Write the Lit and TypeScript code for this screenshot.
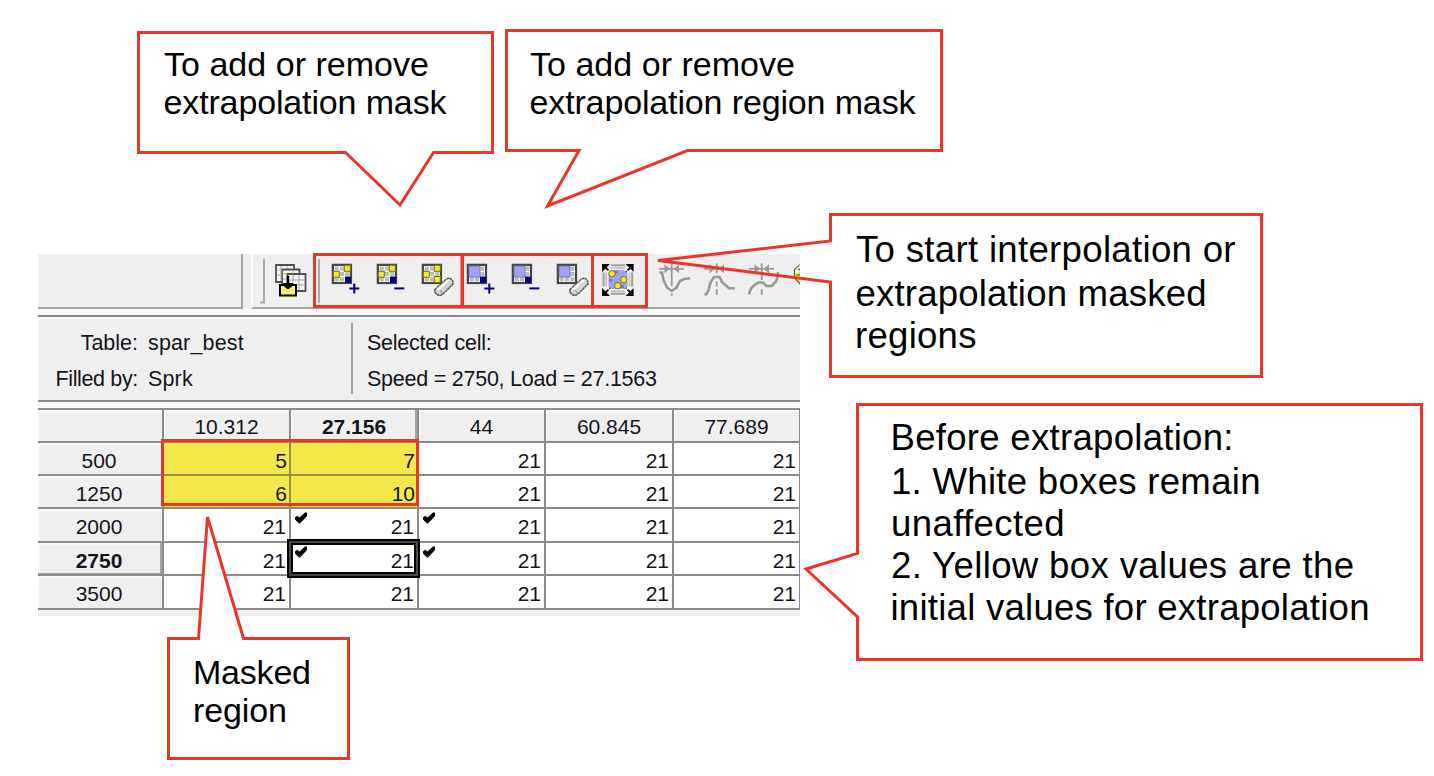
import { LitElement, html, svg, css } from "lit";
import { customElement } from "lit/decorators.js";
import { classMap } from "lit/directives/class-map.js";

type Line = [text: string, x: number, y: number, width: number];

const columns = ["10.312", "27.156", "44", "60.845", "77.689"];
const rows: { label: string; values: number[]; masked?: boolean; checks?: number[] }[] = [
  { label: "500", values: [5, 7, 21, 21, 21], masked: true },
  { label: "1250", values: [6, 10, 21, 21, 21], masked: true },
  { label: "2000", values: [21, 21, 21, 21, 21], checks: [1, 2] },
  { label: "2750", values: [21, 21, 21, 21, 21], checks: [1, 2] },
  { label: "3500", values: [21, 21, 21, 21, 21] },
];

const callouts: { path: string; fill: string; size: number; lines: Line[] }[] = [
  {
    path: "M138.5 32.5H492.5V152.5H433.5L400 205L345.5 152.5H138.5Z",
    fill: "#fff",
    size: 34,
    lines: [
      ["To add or remove", 164, 76, 265],
      ["extrapolation mask", 163.5, 114, 283],
    ],
  },
  {
    path: "M506.5 30.5H941.5V150.5H687.5L547.5 206L579 150.5H506.5Z",
    fill: "#fff",
    size: 34,
    lines: [
      ["To add or remove", 530, 76, 265],
      ["extrapolation region mask", 529.5, 114, 386],
    ],
  },
  {
    path: "M830.5 214.5H1261.5V376.5H830.5V282L658 260.5L830.5 241Z",
    fill: "none",
    size: 36.6,
    lines: [
      ["To start interpolation or", 856, 262, 379.5],
      ["extrapolation masked", 855.5, 305.5, 351],
      ["regions", 855, 348, 121.5],
    ],
  },
  {
    path: "M857.5 404.5H1421.5V659.5H857.5V617L806 569L857.5 553.5Z",
    fill: "#fff",
    size: 36.6,
    lines: [
      ["Before extrapolation:", 890.5, 450, 343],
      ["1. White boxes remain", 891, 493.5, 369.5],
      ["unaffected", 891, 536, 173.5],
      ["2. Yellow box values are the", 891, 578, 463],
      ["initial values for extrapolation", 890.5, 620, 479],
    ],
  },
  {
    path: "M168.5 638.5H198.5L207.5 517L243.5 638.5H348.5V758.5H168.5Z",
    fill: "#fff",
    size: 34,
    lines: [
      ["Masked", 193, 684, 118],
      ["region", 193, 721.5, 94],
    ],
  },
];

const gridFrame = svg`
  <rect x="4.7" y="9.7" width="20.4" height="20.4" fill="#484848" />
  <rect x="7" y="12" width="16" height="16" fill="#fff" />
  <path d="M7.5 12.5h4.3v4.3h-4.3zM12.9 12.5h4.3v4.3h-4.3zM18.3 12.5h4.3v4.3h-4.3zM7.5 17.9h4.3v4.3h-4.3zM12.9 17.9h4.3v4.3h-4.3zM18.3 17.9h4.3v4.3h-4.3zM7.5 23.3h4.3v4.3h-4.3zM12.9 23.3h4.3v4.3h-4.3zM18.3 23.3h4.3v4.3h-4.3z" fill="#bdbdbd" />`;
const yellowDots = svg`
  <rect x="17.3" y="11.3" width="6" height="6" fill="#f5ea1c" stroke="#776f28" stroke-width="1" />
  <rect x="6.3" y="17.3" width="6" height="6" fill="#f5ea1c" stroke="#776f28" stroke-width="1" />`;
const regionFill = svg`<rect x="7" y="12" width="11" height="11" fill="#a2a2fb" stroke="#6b6b9a" stroke-width=".8" />`;
const navyDot = svg`<rect x="18" y="22.6" width="6.2" height="6.2" fill="#000080" />`;
const plus = svg`<path d="M22.3 34.4h10M27.3 29.4v10" stroke="#000080" stroke-width="2" />`;
const minus = svg`<path d="M22.3 34.4h10" stroke="#000080" stroke-width="2" />`;
const eraser = svg`
  <path d="M18 35.5L29 25.5Q32 23 34.5 25.5Q37 28 35.5 30.5L26 40Q22.5 42.5 19.5 40Q17 38 18 35.5Z" fill="#d4d4d4" stroke="#555" stroke-width="1.5" stroke-dasharray="2.6 .5" />
  <path d="M19.5 35L29.5 26.3Q31.5 25 33 26.2L22.5 36Z" fill="#fff" />
  <path d="M22.8 36.2Q25.5 37.5 25.2 40" fill="none" stroke="#888" />`;
const arrowsOnAxis = svg`
  <path d="M7 14.8h25" stroke="#999" stroke-width="1.7" />
  <path d="M12.5 10.3L18 14.8L12.5 19.3ZM27 10.3L21.5 14.8L27 19.3Z" fill="#999" />`;

const maskIcons = [
  svg`${gridFrame}${yellowDots}${navyDot}${plus}`,
  svg`${gridFrame}${yellowDots}${navyDot}${minus}`,
  svg`${gridFrame}${yellowDots}<rect x="17.3" y="22.5" width="6" height="6" fill="#f5ea1c" stroke="#776f28" stroke-width="1" />${eraser}`,
  svg`${gridFrame}${regionFill}${navyDot}${plus}`,
  svg`${gridFrame}${regionFill}${navyDot}${minus}`,
  svg`${gridFrame}${regionFill}${eraser}`,
  svg`
    <path d="M14 11.2h14M14 39.8h14M6.5 18.5v14M35.2 18.5v14" stroke="#a0a0a0" stroke-width="2" />
    <path d="M14 14h14M14 37.2h14M9.2 18.5v14M32.6 18.5v14" stroke="#bdbdbd" stroke-width="1.6" />
    <rect x="11.5" y="16" width="19" height="19" fill="#a2a2f8" />
    <path d="M18 16.5h3v3h-3zM12 25h3v3h-3zM24 31h3v3h-3z" fill="#7b7bb8" />
    <path d="M6 11L13 18M36 11L29 18M6 41L13 34M36 41L29 34" stroke="#fff" stroke-width="5" />
    <path d="M7 12L13 18M35 12L29 18M7 40L13 34M35 40L29 34" stroke="#000" stroke-width="1.8" stroke-dasharray="6.3 1.3" />
    <path d="M5 10h8l-8 8zM36.6 10h-8l8 8zM5 42h8l-8-8zM36.6 42h-8l8-8z" fill="#000" />
    <g fill="#f7e91b" stroke="#77702a" stroke-width="1">
      <circle cx="15" cy="19.7" r="3.2" /><circle cx="26.7" cy="25.7" r="3.2" /><circle cx="20.7" cy="31.7" r="3.2" />
    </g>`,
];

const curveIcons = [
  svg`${arrowsOnAxis}
    <path d="M19.7 9.3V32M19.7 39.5v2.2" stroke="#999" stroke-width="1.8" />
    <path d="M7.5 18.5H10L11.5 26L15 33.5L19.7 37L24.5 33.5L28 27L32 25L38 24.3" fill="none" stroke="#999" stroke-width="2.6" />`,
  svg`${arrowsOnAxis}
    <path d="M19.7 9.3V19M19.7 27.5v5M19.7 35v6" stroke="#999" stroke-width="1.8" />
    <path d="M7.3 40.3H9.5L11.5 36L13.5 28.5L17 23H22.5L25 28L30.3 32.7L32 34.3H38" fill="none" stroke="#999" stroke-width="2.6" />`,
  svg`${arrowsOnAxis}
    <path d="M19.7 9.3V26M19.7 35v6" stroke="#999" stroke-width="1.8" />
    <path d="M7 40.3L9 34.5L12.5 31L16.5 28.5H21L24.5 32H29.5L34 27.5L36 22V18" fill="none" stroke="#999" stroke-width="2.6" />`,
  svg`
    <path d="M14 10L7.5 15.5V24L14 31Z" fill="#f7ee35" stroke="#555" stroke-width="1.2" />
    <path d="M8 16L13 11V17L8 19Z" fill="#fff" /><path d="M9.5 21h4M10.5 15.5h3" stroke="#3c8a3c" stroke-width="1.4" />`,
];

@customElement("app-root")
export class AppRoot extends LitElement {
  static styles = css`
    :host {
      display: block;
      position: relative;
      box-sizing: border-box;
      width: 1434px;
      height: 776px;
      padding: 254px 0 0 38px;
      overflow: hidden;
      background: #fff;
      color: #000;
      font-family: "Liberation Sans", Arial, sans-serif;
    }
    .window {
      display: flex;
      flex-direction: column;
      width: 762px;
      height: 362px;
      overflow: hidden;
      background: #efefef;
      color: #15151c;
    }
    .toolbar {
      display: flex;
      gap: 8px;
      height: 61px;
      background: linear-gradient(#efefef 55px, #fafafa 55px);
    }
    .dock {
      box-sizing: border-box;
      width: 205px;
      height: 55px;
      border-right: 2px solid #a5a5a5;
      border-bottom: 2px solid #a5a5a5;
    }
    .tools {
      display: flex;
      box-sizing: border-box;
      flex: 1;
      min-width: 0;
      height: 55px;
      border-left: 2px solid #fafafa;
      border-bottom: 2px solid #a5a5a5;
      overflow: hidden;
    }
    .tools svg {
      flex: none;
      display: block;
    }
    .curves {
      display: flex;
      flex: none;
      margin-left: 10px;
    }
    .info {
      box-sizing: border-box;
      display: flex;
      height: 87px;
      padding-top: 6px;
      border-top: 2px solid #8c8c8c;
      border-bottom: 2px solid #8c8c8c;
      box-shadow: inset 0 2px #fafafa;
      font-size: 21.5px;
      line-height: 35.5px;
      white-space: pre;
    }
    .names {
      width: 100px;
      padding-top: 3px;
      text-align: right;
    }
    .filled {
      letter-spacing: -0.35px;
    }
    .source {
      box-sizing: border-box;
      width: 215px;
      height: 71px;
      padding: 3px 0 0 10px;
      border-right: 2px solid #a0a0a0;
      letter-spacing: 0.15px;
    }
    .cell-info {
      padding: 3px 0 0 14px;
      letter-spacing: -0.24px;
    }
    .gap {
      height: 6px;
      background: #fafafa;
    }
    .table {
      display: grid;
      grid-template-columns: 124px 125px 126px 125px 126px 125px;
      grid-template-rows: 31px 31px 31px 32px 31px 32px;
      gap: 2px;
      padding: 2px 0;
      width: 760px;
      background: #8b8b8b;
      border-right: 2px solid #8b8b8b;
      font-size: 21px;
      line-height: 35px;
      box-sizing: content-box;
    }
    .table > div {
      position: relative;
      min-width: 0;
    }
    .head {
      background: #efefef;
      text-align: center;
      line-height: 34px;
      box-shadow: inset 1px 2px #fbfbfb;
    }
    .row-head {
      padding-right: 2px;
      line-height: 35px;
    }
    .active {
      font-weight: bold;
      box-shadow: inset -2px -1px #a5a5a5, inset 2px 2px #f8f8f8;
    }
    .value {
      background: #fff;
      padding-right: 3px;
      text-align: right;
    }
    .masked {
      padding-right: 2px;
      background: #f3e74c;
      box-shadow: 0 0 0 1px #978f45;
    }
    .check {
      position: absolute;
      left: 4px;
      top: 3px;
    }
    .selected {
      position: absolute;
      left: -4px;
      top: -4px;
      width: 133px;
      height: 39px;
      box-sizing: border-box;
      border: 2px solid #000;
      box-shadow: inset 0 0 0 2px #484848, inset 0 0 0 4px #000;
      z-index: 1;
    }
    .notes {
      position: absolute;
      left: 0;
      top: 0;
      z-index: 2;
    }
  `;

  private note(c: (typeof callouts)[number]) {
    return svg`
      <path d=${c.path} fill=${c.fill} stroke="#ec3526" stroke-width="3" />
      ${c.lines.map(
        ([text, x, y, width]) =>
          svg`<text x=${x} y=${y} font-size=${c.size} textLength=${width} fill="#000">${text}</text>`
      )}`;
  }

  private icon(shape: unknown) {
    return html`<svg width="45" height="53" viewBox="0 0 45 53">${shape}</svg>`;
  }

  private get check() {
    return html`<svg class="check" width="13" height="13" viewBox="0 0 13 13">
      <path d="M0 5.5L2 3.8L4.5 5.5L10 .5H12V4L5 11.5H4L0 7.5Z" fill="#000" />
    </svg>`;
  }

  render() {
    return html`
      <div class="window">
        <div class="toolbar">
          <div class="dock"></div>
          <div class="tools">
            <svg width="74" height="53" viewBox="253 0 74 53">
              <path d="M260 48.5h4V5" fill="none" stroke="#a3a3a3" stroke-width="1.8" />
              <path d="M319 5v44" stroke="#a3a3a3" stroke-width="1.8" />
              <g fill="#f6f6f6" stroke="#505050" stroke-width="1.8">
                <path d="M276 11h18v17h-18z" />
                <path d="M282 15.5h17.5v17H282z" />
                <path d="M287.5 20h18v17h-18z" />
              </g>
              <path d="M277 16h5M277 21h5M281 12v15M287 12v3M283 20h4M293 16v4M283 25h4M288 26h17M288 31h17M293 21v15M299 21v15" stroke="#a7a7a7" stroke-width="1" />
              <path d="M280 31h4l3.5 3h1l3.5-3h4v10.5h-16z" fill="#f8ef63" stroke="#000" stroke-width="2" />
              <path d="M288 22v9" stroke="#000" stroke-width="2.4" />
              <path d="M282.5 29h11L288 34.5z" fill="#000" />
            </svg>
            ${maskIcons.map((i) => this.icon(i))}
            <div class="curves">${curveIcons.map((i) => this.icon(i))}</div>
          </div>
        </div>
        <div class="info">
          <div class="names">Table:<br /><span class="filled">Filled by:</span></div>
          <div class="source">spar_best<br />Sprk</div>
          <div class="cell-info">Selected cell:<br />Speed = 2750, Load = 27.1563</div>
        </div>
        <div class="gap"></div>
        <div class="table">
          <div class="head"></div>
          ${columns.map((c, i) => html`<div class=${classMap({ head: true, active: i === 1 })}>${c}</div>`)}
          ${rows.map(
            (r) => html`
              <div class=${classMap({ head: true, "row-head": true, active: r.label === "2750" })}>${r.label}</div>
              ${r.values.map(
                (v, i) => html`<div class=${classMap({ value: true, masked: !!r.masked && i < 2 })}>
                  ${v}${r.checks?.includes(i) ? this.check : ""}${r.label === "2750" && i === 1
                    ? html`<div class="selected"></div>`
                    : ""}
                </div>`
              )}
            `
          )}
        </div>
      </div>
      <svg class="notes" width="1434" height="776" viewBox="0 0 1434 776">
        <g fill="none" stroke="#ec3526" stroke-width="3">
          <rect x="314.5" y="254.5" width="147.5" height="52" />
          <rect x="462.5" y="254.5" width="130" height="52" />
          <rect x="592.5" y="254.5" width="54" height="52" />
          <rect x="162.5" y="440.5" width="255" height="64" />
        </g>
        ${callouts.map((c) => this.note(c))}
      </svg>
    `;
  }
}
